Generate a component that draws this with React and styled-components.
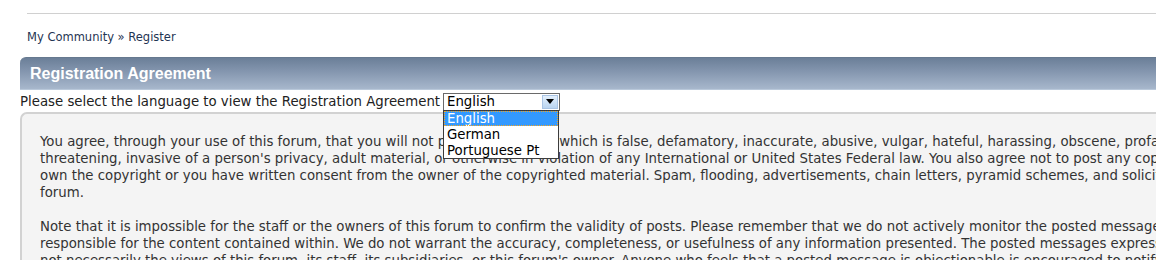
import React from 'react'
import styled, { createGlobalStyle } from 'styled-components'

const GlobalStyle = createGlobalStyle`
    body {
        margin: 0;
        background: #fff;
        overflow: hidden;
        font-family: Verdana, "DejaVu Sans", sans-serif;
        color: #333;
    }
`

const Page = styled.div`
    width: 1500px;
    padding-top: 13px;
`

const TopRule = styled.div`
    margin-left: 27px;
    border-top: 1px solid #d0d0d0;
`

const Breadcrumb = styled.div`
    margin: 16px 0 0 27px;
    height: 14px;
    font-size: 11.5px;
    line-height: 14px;
    color: #1f3553;
`

const Panel = styled.div`
    margin: 13px 0 0 20px;
`

const Header = styled.div`
    height: 33px;
    border-radius: 6px 0 0 0;
    background: linear-gradient(to bottom, #6b7f98 0%, #8294ad 40%, #a7b7cc 100%);
    border-top: 1px solid #66798f;
    border-bottom: 1px solid #b9c8da;
    box-sizing: border-box;
    padding-left: 10px;
    font-family: "Liberation Sans", Arial, sans-serif;
    font-weight: bold;
    font-size: 16px;
    line-height: 31px;
    color: #fff;
`

const LangRow = styled.div`
    display: flex;
    align-items: center;
    height: 22px;
    font-size: 13.3px;
    color: #222;
`

const SelectWrap = styled.div`
    position: relative;
    margin-left: 3px;
    margin-top: 1px;
`

const SelectBox = styled.div`
    display: flex;
    width: 117px;
    height: 18px;
    box-sizing: border-box;
    border: 1px solid #6a6a6a;
    background: #fff;
    font-size: 13.3px;
    line-height: 16px;
    color: #000;
`

const SelectValue = styled.span`
    flex: 1;
    padding-left: 3px;
`

const ArrowButton = styled.span`
    width: 16px;
    margin: 1px;
    display: flex;
    align-items: center;
    justify-content: center;
    background: linear-gradient(to bottom, #e4f0fc, #b9d4f0);
    border: 1px solid #a9c4e4;
    box-sizing: border-box;
`

const Options = styled.ul`
    position: absolute;
    top: 17px;
    left: 0;
    z-index: 2;
    width: 116px;
    margin: 0;
    padding: 0;
    list-style: none;
    box-sizing: border-box;
    border: 1px solid #3c3c3c;
    background: #fff;
    font-size: 13.3px;
    line-height: 15px;
`

const Option = styled.li`
    height: 15px;
    padding-left: 3px;
    margin-top: ${p => (p.$first ? '0' : '1px')};
    color: ${p => (p.$active ? '#fff' : '#000')};
    background: ${p => (p.$active ? '#3399ff' : 'transparent')};
    outline: ${p => (p.$active ? '1px dotted #f5a623' : 'none')};
    outline-offset: -1px;
`

const AgreementBox = styled.div`
    height: 200px;
    background: #f4f4f4;
    border-top: 2px solid #d2d2d2;
    border-left: 2px solid #d2d2d2;
    border-radius: 7px 0 0 0;
    padding: 19px 0 0 18px;
    font-size: 13.3px;
    line-height: 17px;
    color: #333;
`

const Para = styled.p`
    margin: 0 0 17px 0;
    white-space: nowrap;
`

const Arrow = () => (
    <svg width="8" height="5" viewBox="0 0 8 5">
        <path d="M0 0 H8 L4 5 Z" fill="#000" />
    </svg>
)

const para1 = [
    "You agree, through your use of this forum, that you will not post any material which is false, defamatory, inaccurate, abusive, vulgar, hateful, harassing, obscene, profane, sexually oriented,",
    "threatening, invasive of a person's privacy, adult material, or otherwise in violation of any International or United States Federal law. You also agree not to post any copyrighted material unless you",
    "own the copyright or you have written consent from the owner of the copyrighted material. Spam, flooding, advertisements, chain letters, pyramid schemes, and solicitations are also forbidden on this",
    "forum.",
]

const para2 = [
    "Note that it is impossible for the staff or the owners of this forum to confirm the validity of posts. Please remember that we do not actively monitor the posted messages, and as such, are not",
    "responsible for the content contained within. We do not warrant the accuracy, completeness, or usefulness of any information presented. The posted messages express the views of the author, and",
    "not necessarily the views of this forum, its staff, its subsidiaries, or this forum's owner. Anyone who feels that a posted message is objectionable is encouraged to notify us immediately.",
]

const Lines = ({ lines }) => (
    <Para>
        {lines.map((line, i) => (
            <React.Fragment key={i}>
                {line}
                {i < lines.length - 1 && <br />}
            </React.Fragment>
        ))}
    </Para>
)

const languages = ['English', 'German', 'Portuguese Pt']

const App = () => {
    return (
        <Page>
            <GlobalStyle />
            <TopRule />
            <Breadcrumb>My Community &raquo; Register</Breadcrumb>
            <Panel>
                <Header>Registration Agreement</Header>
                <LangRow>
                    Please select the language to view the Registration Agreement
                    <SelectWrap>
                        <SelectBox>
                            <SelectValue>English</SelectValue>
                            <ArrowButton><Arrow /></ArrowButton>
                        </SelectBox>
                        <Options>
                            {languages.map((lang, i) => (
                                <Option key={lang} $first={i === 0} $active={i === 0}>{lang}</Option>
                            ))}
                        </Options>
                    </SelectWrap>
                </LangRow>
                <AgreementBox>
                    <Lines lines={para1} />
                    <Lines lines={para2} />
                </AgreementBox>
            </Panel>
        </Page>
    )
}

export default App
